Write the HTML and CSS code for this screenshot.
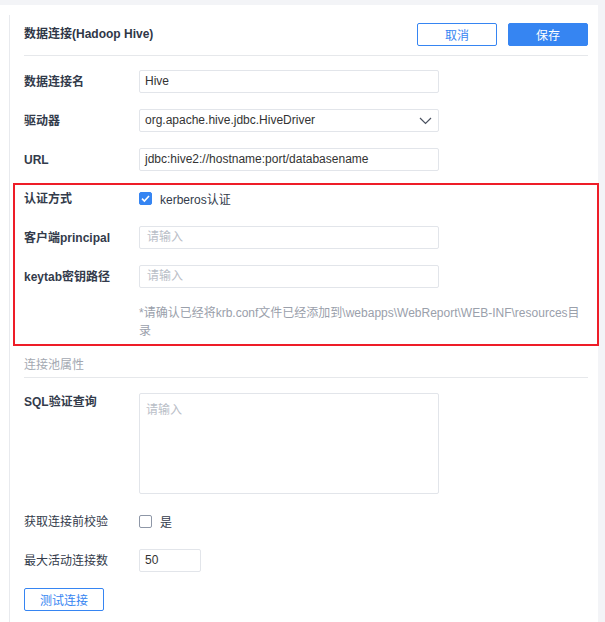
FILE: index.html
```html
<!DOCTYPE html>
<html lang="zh-CN">
<head>
<meta charset="utf-8">
<title>数据连接(Hadoop Hive)</title>
<link rel="stylesheet" href="styles.css">
</head>
<body>
<div class="panel">
  <div class="content">
    <div class="header">
      <div class="title">数据连接(Hadoop Hive)</div>
      <div class="actions">
        <button class="btn btn-outline">取消</button>
        <button class="btn btn-primary">保存</button>
      </div>
    </div>

    <div class="form">
      <div class="row first">
        <div class="label strong">数据连接名</div>
        <div class="field">Hive</div>
      </div>
      <div class="row">
        <div class="label strong">驱动器</div>
        <div class="field select">
          <span>org.apache.hive.jdbc.HiveDriver</span>
          <svg class="chev" width="13" height="8" viewBox="0 0 13 8"><path d="M1 1 L6.5 6.5 L12 1" fill="none" stroke="#4a5160" stroke-width="1.2"/></svg>
        </div>
      </div>
      <div class="row">
        <div class="label strong">URL</div>
        <div class="field">jdbc:hive2://hostname:port/databasename</div>
      </div>

      <div class="highlight">
        <div class="row inbox">
          <div class="label strong">认证方式</div>
          <div class="check">
            <span class="box checked"><svg width="13" height="13" viewBox="0 0 13 13"><path d="M3 6.6 L5.4 9 L10 4" fill="none" stroke="#fff" stroke-width="1.6"/></svg></span>
            <span class="check-text">kerberos认证</span>
          </div>
        </div>
        <div class="row">
          <div class="label strong">客户端principal</div>
          <div class="field placeholder">请输入</div>
        </div>
        <div class="row">
          <div class="label strong">keytab密钥路径</div>
          <div class="field placeholder">请输入</div>
        </div>
        <div class="note">*请确认已经将krb.conf文件已经添加到\webapps\WebReport\WEB-INF\resources目录</div>
      </div>

      <div class="section">连接池属性</div>

      <div class="row top">
        <div class="label strong">SQL验证查询</div>
        <div class="field area placeholder">请输入</div>
      </div>
      <div class="row">
        <div class="label">获取连接前校验</div>
        <div class="check">
          <span class="box"></span>
          <span class="check-text">是</span>
        </div>
      </div>
      <div class="row">
        <div class="label">最大活动连接数</div>
        <div class="field small">50</div>
      </div>
      <div class="test">
        <button class="btn btn-outline">测试连接</button>
      </div>
    </div>
  </div>
</div>
</body>
</html>
```

FILE: styles.css
```css
html, body {
  margin: 0;
  padding: 0;
}
body {
  background: #f3f4f7;
  font-family: "Liberation Sans", "Noto Sans CJK SC", sans-serif;
  font-size: 12px;
  color: #333;
  width: 605px;
  height: 622px;
  overflow: hidden;
}
.panel {
  margin-top: 5px;
  width: 598px;
  height: 617px;
  background: #fff;
  box-sizing: border-box;
  padding: 10px 10px 0 9px;
}
.content {
  border-left: 1px solid #e8eaee;
  height: 100%;
  padding-left: 14px;
}
.header {
  display: flex;
  justify-content: space-between;
  align-items: center;
  padding: 8px 0 9px;
  border-bottom: 1px solid #e6e8eb;
}
.title {
  font-weight: 700;
  color: #2f3747;
  line-height: 23px;
}
.actions {
  display: flex;
  gap: 11px;
}
.btn {
  width: 80px;
  height: 23px;
  box-sizing: border-box;
  border-radius: 2px;
  font-family: "Liberation Sans", "Noto Sans CJK SC", sans-serif;
  font-size: 12px;
  padding: 0;
  cursor: pointer;
}
.btn-outline {
  background: #fff;
  border: 1px solid #3685f2;
  color: #3685f2;
}
.btn-primary {
  background: #3685f2;
  border: 1px solid #3685f2;
  color: #fff;
}
.row {
  display: flex;
  align-items: center;
  margin-top: 16px;
  min-height: 23px;
}
.row.first {
  margin-top: 14px;
}
.row.inbox {
  margin-top: 0;
}
.row.top {
  align-items: flex-start;
  margin-top: 15px;
}
.label {
  width: 115px;
  flex: none;
  color: #333b4b;
  line-height: 18px;
}
.label.strong {
  font-weight: 700;
}
.field {
  width: 300px;
  height: 23px;
  box-sizing: border-box;
  border: 1px solid #e2e5ea;
  border-radius: 2px;
  padding: 0 5px;
  line-height: 21px;
  color: #333;
  white-space: nowrap;
}
.field.placeholder {
  color: #b9bec7;
  padding-left: 7px;
}
.field.select {
  display: flex;
  justify-content: space-between;
  align-items: center;
  padding-right: 6px;
}
.chev {
  display: block;
}
.field.area {
  height: 101px;
  line-height: 18px;
  padding: 7px 6px;
}
.field.small {
  width: 62px;
}
.highlight {
  margin: 12px -11px 0;
  border: 2px solid #ee1d28;
  padding: 2px 9px 4px;
}
.check {
  display: flex;
  align-items: center;
  height: 23px;
}
.box {
  width: 13px;
  height: 13px;
  box-sizing: border-box;
  border: 1px solid #8e97a7;
  border-radius: 2px;
  display: block;
}
.box.checked {
  background: #3685f2;
  border-color: #3685f2;
}
.box svg {
  display: block;
  margin: -1px;
}
.check-text {
  margin-left: 8px;
  color: #333b4b;
}
.note {
  margin: 16px 0 0 115px;
  line-height: 18px;
  color: #9aa0ab;
}
.section {
  margin-top: 10px;
  line-height: 18px;
  padding-bottom: 3px;
  color: #a3a8b1;
  border-bottom: 1px solid #e6e8eb;
}
.test {
  margin-top: 16px;
}
```
